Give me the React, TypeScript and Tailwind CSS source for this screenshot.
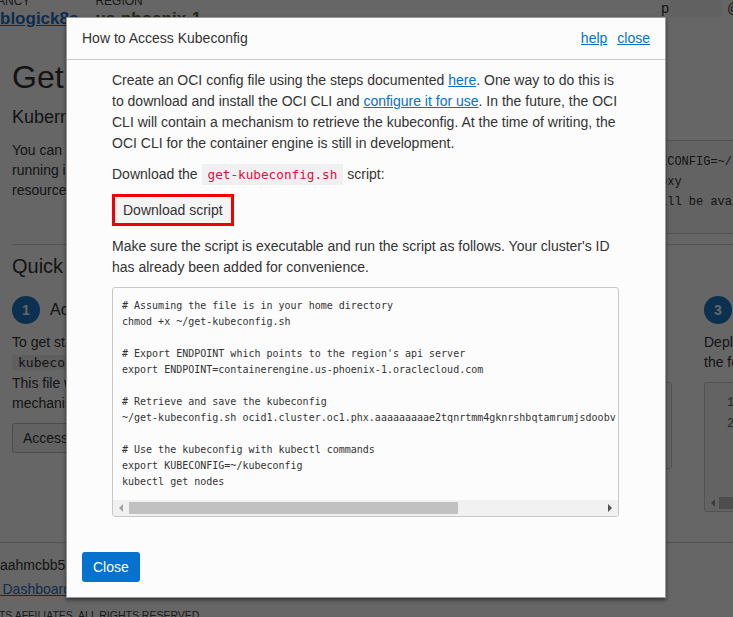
import React from 'react';

const codeLines = [
  '# Assuming the file is in your home directory',
  'chmod +x ~/get-kubeconfig.sh',
  '',
  "# Export ENDPOINT which points to the region's api server",
  'export ENDPOINT=containerengine.us-phoenix-1.oraclecloud.com',
  '',
  '# Retrieve and save the kubeconfig',
  '~/get-kubeconfig.sh ocid1.cluster.oc1.phx.aaaaaaaaae2tqnrtmm4gknrshbqtamrumjsdoobv',
  '',
  '# Use the kubeconfig with kubectl commands',
  'export KUBECONFIG=~/kubeconfig',
  'kubectl get nodes',
];

function StepCircle({ n }: { n: number }) {
  return (
    <div className="flex h-[28px] w-[28px] shrink-0 items-center justify-center rounded-full bg-[#1f78c8] text-[14px] font-bold text-white">
      {n}
    </div>
  );
}

function BackgroundPage() {
  return (
    <div className="w-[1030px] text-[#333]">
      {/* Top bar */}
      <div className="flex h-[52px] items-start">
        <div className="-mt-[6px] flex flex-col">
          <span className="-ml-[27px] text-[12px] leading-[14px] uppercase text-[#444]">Tenancy</span>
          <a className="mt-[1px] text-[17px] font-bold leading-[20px] text-[#1f6fc0] underline">blogick8s</a>
        </div>
        <div className="-mt-[6px] ml-[17px] flex flex-col">
          <span className="text-[12px] leading-[14px] uppercase text-[#444]">Region</span>
          <span className="mt-[1px] text-[17px] font-bold leading-[20px] text-[#4a6628]">us-phoenix-1</span>
        </div>
        <div className="ml-[460px] mt-[-2px] flex items-center text-[14px] leading-[20px]">
          <span>p</span>
          <span className="mx-[1px] inline-block h-[18px] w-[52px] bg-[#f2f2f2] blur-[1px]" />
          <span className="ml-[4px]">@</span>
        </div>
      </div>

      <div className="px-[12px]">
        <h1 className="mt-[7px] text-[32px] leading-[36px]">Get Started</h1>
        <h2 className="mt-[11px] text-[18px] leading-[22px]">Kubernetes Cluster</h2>
        <div className="mt-[12px] flex gap-[20px]">
          <p className="w-[545px] text-[14px] leading-[20px]">
            You can use kubectl
            <br />
            running in your tenancy
            <br />
            resources.
          </p>
          <pre className="h-[94px] flex-1 rounded-[3px] border border-[#ccc] bg-[#f7f7f7] px-[10px] pt-[11px] font-['Liberation_Mono',monospace] text-[12px] leading-[20px]">
            {'export KUBECONFIG=~/kubeconfig\nkubectl proxy\n# Server will be available'}
          </pre>
        </div>
        <div className="mt-[10px] border-t border-[#ccc]" />
        <h2 className="mt-[9px] text-[20px] leading-[24px]">Quick Start</h2>

        <div className="mt-[18px] grid grid-cols-[314px_314px_314px] gap-x-[32px]">
          <div>
            <div className="flex items-center gap-[10px]">
              <StepCircle n={1} />
              <span className="text-[16px]">Access Kubeconfig</span>
            </div>
            <p className="mt-[8px] text-[14px] leading-[20px]">
              To get started
              <br />
              <code className="bg-[#eee] px-[6px] font-['DejaVu_Sans_Mono',monospace] text-[13px]">kubeconfig</code>
              <br />
              This file will
              <br />
              mechanism
            </p>
            <button className="mt-[10px] h-[30px] rounded-[3px] border border-[#bbb] bg-[#f5f5f5] px-[10px] text-[14px]">
              Access Kubeconfig
            </button>
          </div>
          <div>
            <div className="flex items-center gap-[10px]">
              <StepCircle n={2} />
              <span className="text-[16px]">Verify</span>
            </div>
            <p className="mt-[8px] text-[14px] leading-[20px]">
              &nbsp;
              <br />
              &nbsp;
            </p>
            <pre className="mt-[10px] h-[87px] overflow-hidden rounded-[3px] border border-[#ccc] bg-[#f7f7f7] pl-[300px] pt-[10px] font-['Liberation_Mono',monospace] text-[12px] leading-[21px]">
              {'c'}
            </pre>
          </div>
          <div>
            <div className="flex items-center gap-[10px]">
              <StepCircle n={3} />
              <span className="text-[16px]">Deploy</span>
            </div>
            <p className="mt-[8px] text-[14px] leading-[20px]">
              Deploy a sample app
              <br />
              the following
            </p>
            <div className="mt-[10px] flex h-[130px] flex-col rounded-[3px] border border-[#ccc] bg-[#f7f7f7]">
              <div className="flex-1 pl-[22px] pt-[10px] font-['Liberation_Mono',monospace] text-[12px] leading-[21px] text-[#666]">
                <div>1</div>
                <div>2</div>
              </div>
              <div className="mb-[1px] flex h-[14px] items-center pl-[6px]">
                <span className="h-0 w-0 border-y-[4px] border-r-[4px] border-y-transparent border-r-[#999]" />
                <span className="ml-[4px] h-[12px] w-[200px] bg-[#c1c1c1]" />
              </div>
            </div>
          </div>
        </div>
      </div>

      <div className="mt-[30px] border-t border-[#ccc]" />
      <div className="mt-[12px] text-[14px] leading-[20px]">aahmcbb5r</div>
      <a className="-ml-[73px] mt-[4px] block text-[14px] leading-[20px] text-[#1f6fc0] underline">Kubernetes Dashboard</a>
      <div className="-ml-[4px] mt-[9px] text-[10.5px] uppercase leading-[14px] text-[#444]">
        its affiliates. All rights reserved.
      </div>
    </div>
  );
}

function Modal() {
  return (
    <div className="flex w-[600px] flex-col border border-[#9a9a9a] bg-[#fcfcfc] shadow-[0_2px_4px_rgba(0,0,0,0.5)]">
      {/* Header */}
      <div className="flex h-[42px] items-center justify-between border-b border-[#c6cacd] px-[15px]">
        <span className="text-[14px] text-[#333]">How to Access Kubeconfig</span>
        <div className="flex gap-[10px] text-[14px] text-[#0572ce]">
          <a className="underline">help</a>
          <a className="underline">close</a>
        </div>
      </div>

      {/* Body */}
      <div className="pl-[45px] pr-[46px] pt-[10px] text-[14px] leading-[21px] text-[#333]">
        <p>
          Create an OCI config file using the steps documented{' '}
          <a className="text-[#0572ce] underline">here</a>. One way to do this is to download and install the OCI CLI and{' '}
          <a className="text-[#0572ce] underline">configure it for use</a>. In the future, the OCI CLI will contain a
          mechanism to retrieve the kubeconfig. At the time of writing, the OCI CLI for the container engine is still in
          development.
        </p>
        <p className="mt-[10px]">
          Download the{' '}
          <code className="inline-block bg-[#f0f0f0] px-[6px] font-['DejaVu_Sans_Mono',monospace] text-[12.7px] leading-[21px] text-[#dd1144]">
            get-kubeconfig.sh
          </code>{' '}
          script:
        </p>
        <button className="mt-[9px] block border-[3px] border-[#f00000] bg-[#f4f4f4] px-[8px] py-[3px] text-[14px] leading-[20px] text-[#333]">
          Download script
        </button>
        <p className="mt-[10px]">
          Make sure the script is executable and run the script as follows. Your cluster's ID has already been added for
          convenience.
        </p>

        {/* Code box */}
        <div className="mt-[9px] overflow-hidden rounded-[3px] border border-[#c8c8c8]">
          <pre className="overflow-hidden pb-[10px] pl-[9px] pt-[10px] font-['DejaVu_Sans_Mono',monospace] text-[10px] leading-[16px] text-[#333]">
            {codeLines.join('\n')}
          </pre>
          <div className="flex h-[16px] items-center bg-[#f1f1f1]">
            <div className="flex w-[16px] justify-center">
              <span className="h-0 w-0 border-y-[4px] border-r-[4px] border-y-transparent border-r-[#a3a3a3]" />
            </div>
            <div className="h-[12px] w-[329px] bg-[#c1c1c1]" />
            <div className="flex-1" />
            <div className="flex w-[16px] justify-center">
              <span className="h-0 w-0 border-y-[4px] border-l-[4px] border-y-transparent border-l-[#505050]" />
            </div>
          </div>
        </div>
      </div>

      {/* Footer */}
      <div className="px-[15px] pb-[15px] pt-[35px]">
        <button className="rounded-[3px] bg-[#0572ce] px-[11px] py-[5px] text-[14px] leading-[20px] text-white">
          Close
        </button>
      </div>
    </div>
  );
}

export default function App() {
  return (
    <div className="relative h-[617px] w-full overflow-hidden bg-white font-['Liberation_Sans',Arial,sans-serif]">
      <BackgroundPage />
      <div className="absolute inset-0 bg-black/60" />
      <div className="absolute inset-0 flex items-start pl-[66px] pt-[17px]">
        <Modal />
      </div>
    </div>
  );
}
